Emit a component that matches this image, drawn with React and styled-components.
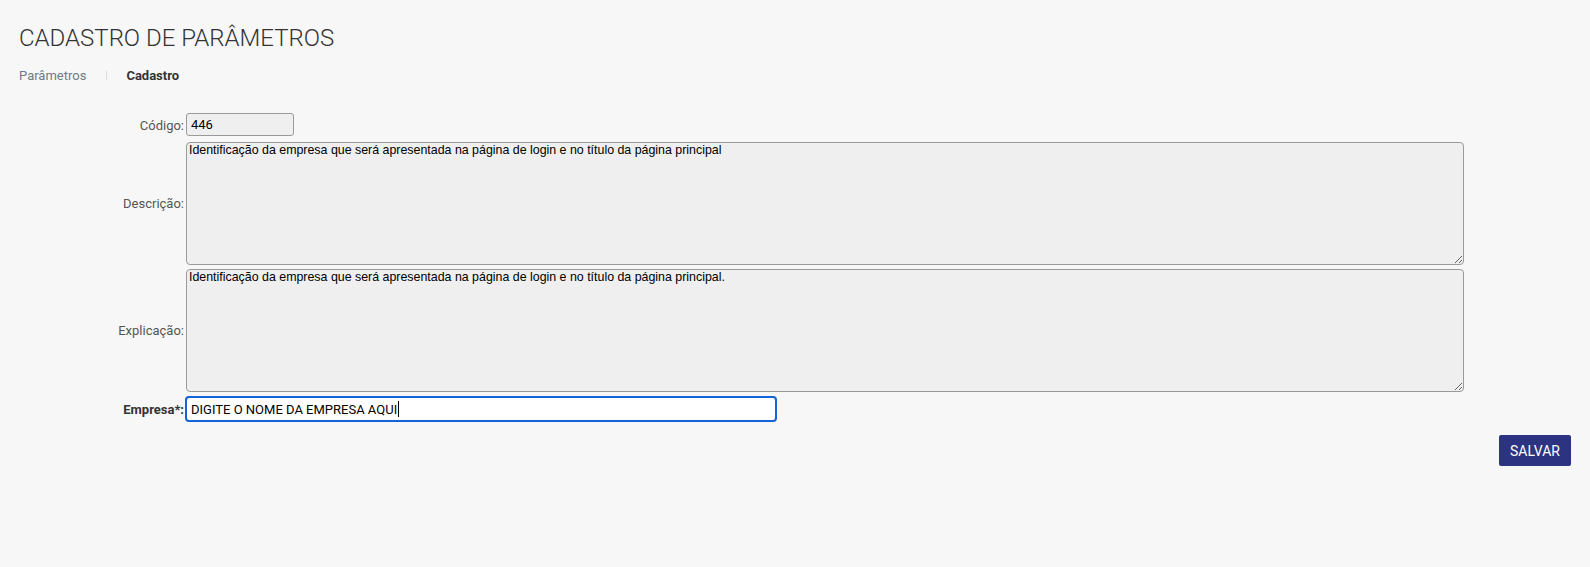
import React from 'react';
import styled, { createGlobalStyle } from 'styled-components';

const GlobalStyle = createGlobalStyle`
    html, body {
        margin: 0;
        padding: 0;
        background: #f7f7f7;
    }
    body {
        font-family: Roboto, "Liberation Sans", sans-serif;
        color: #333;
    }
`;

const Page = styled.div`
    padding: 0 19px;
    min-height: 567px;
    box-sizing: border-box;
`;

const Title = styled.h1`
    margin: 24px 0 0 0;
    font-size: 24px;
    line-height: 28px;
    font-weight: 300;
    color: #333;
    text-transform: uppercase;
`;

const Breadcrumb = styled.nav`
    display: flex;
    align-items: center;
    margin-top: 16px;
    font-size: 13px;
    line-height: 15px;
`;

const Crumb = styled.span`
    color: ${({active}) => active ? "#333" : "#6c7b8b"};
    font-weight: ${({active}) => active ? "bold" : "normal"};
`;

const Separator = styled.span`
    display: block;
    width: 1px;
    height: 9px;
    margin: 0 19px 0 20px;
    background: #dcdcdc;
`;

const Form = styled.form`
    display: grid;
    grid-template-columns: 165px auto;
    column-gap: 2px;
    row-gap: 4px;
    align-items: center;
    justify-items: start;
    margin-top: 30px;
`;

const Label = styled.label`
    justify-self: end;
    font-size: 13px;
    color: ${({required}) => required ? "#333" : "#555"};
    font-weight: ${({required}) => required ? "bold" : "normal"};
`;

const CodeInput = styled.input`
    box-sizing: border-box;
    width: 108px;
    height: 23px;
    margin-bottom: 2px;
    padding: 0 4px;
    border: 1px solid #9a9a9a;
    border-radius: 3px;
    background: #efefef;
    font-family: Roboto, sans-serif;
    font-size: 13px;
    color: #000;
    outline: none;
`;

const TextArea = styled.textarea`
    box-sizing: border-box;
    width: 1278px;
    height: 123px;
    margin: 0;
    padding: 0 2px;
    border: 1px solid #9a9a9a;
    border-radius: 4px;
    background: #efefef;
    font-family: "Liberation Sans", Arial, sans-serif;
    font-size: 12.4px;
    line-height: 15px;
    color: #000;
    outline: none;
`;

const FocusedInput = styled.div`
    box-sizing: border-box;
    display: flex;
    align-items: center;
    width: 592px;
    height: 26px;
    margin-left: -1px;
    padding: 0 4px;
    border: 2px solid #1463d8;
    border-radius: 4px;
    background: #fff;
    font-size: 13px;
    color: #000;
`;

const Caret = styled.span`
    display: inline-block;
    width: 1px;
    height: 16px;
    margin-left: 1px;
    background: #000;
`;

const Actions = styled.div`
    display: flex;
    justify-content: flex-end;
    margin-top: 13px;
`;

const SaveButton = styled.button`
    height: 31px;
    padding: 0 11px;
    border: none;
    border-radius: 2px;
    background: #2c3482;
    color: #fff;
    font-family: Roboto, sans-serif;
    font-size: 14px;
    text-transform: uppercase;
    cursor: pointer;
`;

const descricao = "Identificação da empresa que será apresentada na página de login e no título da página principal";
const explicacao = "Identificação da empresa que será apresentada na página de login e no título da página principal.";

const App = () => {
    return (
        <Page>
            <GlobalStyle />
            <Title>Cadastro de Parâmetros</Title>
            <Breadcrumb>
                <Crumb>Parâmetros</Crumb>
                <Separator />
                <Crumb active>Cadastro</Crumb>
            </Breadcrumb>
            <Form onSubmit={e => e.preventDefault()}>
                <Label>Código:</Label>
                <CodeInput readOnly defaultValue="446" />
                <Label>Descrição:</Label>
                <TextArea readOnly defaultValue={descricao} />
                <Label>Explicação:</Label>
                <TextArea readOnly defaultValue={explicacao} />
                <Label required>Empresa*:</Label>
                <FocusedInput>
                    DIGITE O NOME DA EMPRESA AQUI
                    <Caret />
                </FocusedInput>
            </Form>
            <Actions>
                <SaveButton type="button">Salvar</SaveButton>
            </Actions>
        </Page>
    );
}

export default App;
